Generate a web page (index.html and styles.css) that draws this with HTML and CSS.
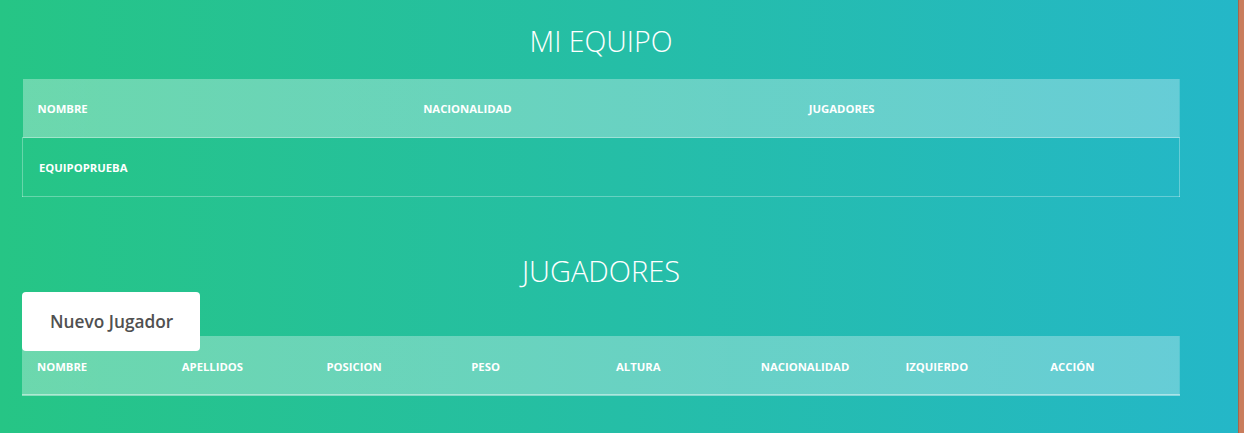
FILE: index.html
```html
<!DOCTYPE html>
<html lang="es">
<head>
<meta charset="utf-8">
<title>Mi equipo</title>
<link rel="stylesheet" href="styles.css">
</head>
<body>
<div class="page">
  <main class="main">
    <h2 class="title title-first">MI EQUIPO</h2>
    <table class="tbl tbl-team">
      <thead>
        <tr><th>NOMBRE</th><th>NACIONALIDAD</th><th>JUGADORES</th></tr>
      </thead>
      <tbody>
        <tr><td>EQUIPOPRUEBA</td><td></td><td></td></tr>
      </tbody>
    </table>

    <h2 class="title title-second">JUGADORES</h2>
    <button class="btn-new" type="button">Nuevo Jugador</button>
    <table class="tbl tbl-players">
      <thead>
        <tr>
          <th>NOMBRE</th><th>APELLIDOS</th><th>POSICION</th><th>PESO</th>
          <th>ALTURA</th><th>NACIONALIDAD</th><th>IZQUIERDO</th><th>ACCIÓN</th>
        </tr>
      </thead>
      <tbody></tbody>
    </table>
  </main>
  <div class="edge"></div>
</div>
</body>
</html>
```

FILE: styles.css
```css
html, body {
  margin: 0;
  padding: 0;
}

body {
  font-family: "Open Sans", "Liberation Sans", sans-serif;
  color: #fff;
}

.page {
  display: flex;
  min-height: 433px;
}

.main {
  flex: 1;
  background: linear-gradient(to right, #26c585, #24b7c8);
  padding: 27px 58px 37px 22px;
}

.edge {
  width: 6px;
  background: #c97d5c;
  border-left: 1px solid #a8654a;
  box-sizing: border-box;
}

.title {
  margin: 0;
  font-size: 28.5px;
  font-weight: 300;
  line-height: 29px;
  text-align: center;
  color: #fff;
}

.title-first {
  margin-bottom: 23px;
}

.title-second {
  margin-top: 59px;
  margin-bottom: 7px;
  font-size: 29px;
}

.tbl {
  width: 100%;
  border-collapse: collapse;
  table-layout: fixed;
}

.tbl th,
.tbl td {
  text-align: left;
  font-size: 11.3px;
  font-weight: 700;
  line-height: 18px;
  padding: 21px 15px 19px;
  color: #fff;
}

.tbl thead tr {
  background: linear-gradient(to right, rgba(255,255,255,0.32), rgba(255,255,255,0.3));
}

.tbl-team th {
  border-bottom: 1px solid rgba(255,255,255,0.35);
}

.tbl-team tbody tr {
  border: 1px solid rgba(255,255,255,0.3);
  border-top: none;
}

.tbl-team td {
  padding-left: 16px;
}

.tbl-players th {
  padding-top: 22px;
  padding-bottom: 18px;
  border-bottom: 2px solid rgba(255,255,255,0.45);
}

.btn-new {
  position: relative;
  z-index: 1;
  display: block;
  width: 178px;
  height: 59px;
  margin-bottom: -15px;
  padding: 0 0 0 28px;
  text-align: left;
  border: none;
  border-radius: 4px;
  background: #fff;
  color: #505050;
  font-family: "Open Sans", "Liberation Sans", sans-serif;
  font-size: 17.3px;
  font-weight: 600;
}
```
